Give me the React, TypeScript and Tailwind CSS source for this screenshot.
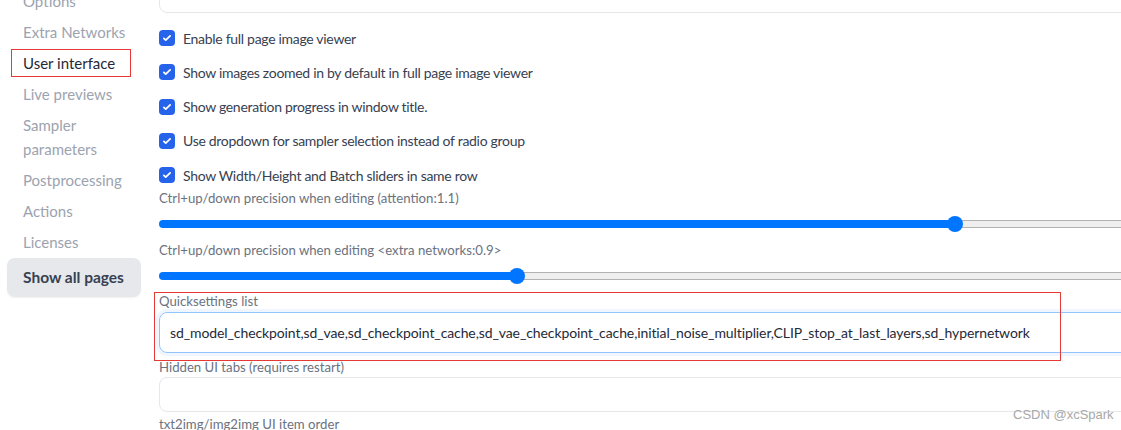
import React from 'react';

const font = { fontFamily: 'Lato, "Noto Sans", sans-serif' };

const navItems = ['Extra Networks', 'User interface', 'Live previews', 'Sampler parameters', 'Postprocessing', 'Actions', 'Licenses'];

const checks = [
  'Enable full page image viewer',
  'Show images zoomed in by default in full page image viewer',
  'Show generation progress in window title.',
  'Use dropdown for sampler selection instead of radio group',
  'Show Width/Height and Batch sliders in same row',
];

const Check: React.FC<{ label: string }> = ({ label }) => (
  <label className="flex items-center h-[20px] gap-[8px] text-[14px] tracking-[-0.3px] text-[#374151]">
    <span className="flex items-center justify-center w-4 h-4 rounded-[4px] bg-[#2563eb] shrink-0">
      <svg viewBox="0 0 16 16" className="w-[10px] h-[10px]" fill="none" stroke="white" strokeWidth="2.8" strokeLinecap="round" strokeLinejoin="round">
        <path d="M3 8.5l3 3 7-7" />
      </svg>
    </span>
    <span>{label}</span>
  </label>
);

// track + filled part; thumb sits over the track
const Slider: React.FC<{ fill: string; thumb: string }> = ({ fill, thumb }) => (
  <div className="relative h-[16px] flex items-center">
    <div className={`h-[8px] rounded-l-full bg-[#0075ff] shrink-0 ${fill}`} />
    <div className="flex-1 h-[8px] border border-l-0 border-[#b2b2b2] bg-[#efefef]" />
    <div className={`absolute top-0 w-4 h-4 rounded-full bg-[#0075ff] ${thumb}`} />
  </div>
);

const labelCls = 'text-[13.2px] leading-[18px] text-[#6b7280]';

export default function App() {
  return (
    <div className="w-[1121px] h-[430px] overflow-hidden bg-white flex relative" style={font}>
      {/* Sidebar */}
      <aside className="w-[152px] shrink-0 pl-[7px] -mt-[11px]">
        <div className="flex flex-col gap-[7px] text-[15px] leading-[24px] text-[#9ca3af] pl-[16px]">
          <div>Options</div>
          {navItems.map((item) =>
            item === 'User interface' ? (
              <div key={item} className="-ml-[12px] w-[120px] pl-[11px] py-px -my-[2px] border border-[#e53935] text-[#1f2937]">
                {item}
              </div>
            ) : item === 'Sampler parameters' ? (
              <div key={item}>
                Sampler
                <br />
                parameters
              </div>
            ) : (
              <div key={item}>{item}</div>
            )
          )}
        </div>
        <button className="mt-[4px] w-[134px] h-[39px] rounded-lg bg-[#e7e8ec] shadow-[0_1px_2px_rgba(0,0,0,0.06)] text-left pl-[16px] text-[15.5px] font-bold text-[#374151]">
          Show all pages
        </button>
      </aside>

      {/* Main */}
      <main className="w-[1000px] shrink-0 pl-[7px] flex flex-col [&>*]:shrink-0">
        <div className="h-[40px] -mt-[27px] rounded-lg border border-[#e5e7eb]" />

        <div className="mt-[15px] flex flex-col gap-[14.25px]">
          {checks.map((c) => (
            <Check key={c} label={c} />
          ))}
        </div>

        <div className={`mt-[4px] ${labelCls}`}>Ctrl+up/down precision when editing (attention:1.1)</div>
        <div className="mt-[8.5px]">
          <Slider fill="w-[796px]" thumb="left-[788px]" />
        </div>

        <div className={`mt-[9.5px] ${labelCls}`}>Ctrl+up/down precision when editing &lt;extra networks:0.9&gt;</div>
        <div className="mt-[8.5px]">
          <Slider fill="w-[358px]" thumb="left-[350px]" />
        </div>

        <div className="relative mt-[8.5px]">
          <div className={labelCls}>Quicksettings list</div>
          <div className="mt-[2px] h-[41px] rounded-lg border border-[#93c5fd] shadow-[0_0_0_3px_#eff6ff] flex items-center pl-[10px] text-[14px] tracking-[-0.1px] text-[#1f2937]">
            sd_model_checkpoint,sd_vae,sd_checkpoint_cache,sd_vae_checkpoint_cache,initial_noise_multiplier,CLIP_stop_at_last_layers,sd_hypernetwork
          </div>
          <div className="absolute -left-[5px] top-0 w-[907px] h-[69px] border border-[#e53935] pointer-events-none" />
        </div>

        <div className={`mt-[5px] ${labelCls}`}>Hidden UI tabs (requires restart)</div>
        <div className="mt-[1px] h-[35px] rounded-lg border border-[#e5e7eb]" />

        <div className={`mt-[3px] ${labelCls}`}>txt2img/img2img UI item order</div>
      </main>

      <div className="absolute left-[1013px] top-[405px] text-[13px] text-[#a8a8a8]" style={{ fontFamily: '"Liberation Sans", Arial, sans-serif' }}>
        CSDN @xcSpark
      </div>
    </div>
  );
}
